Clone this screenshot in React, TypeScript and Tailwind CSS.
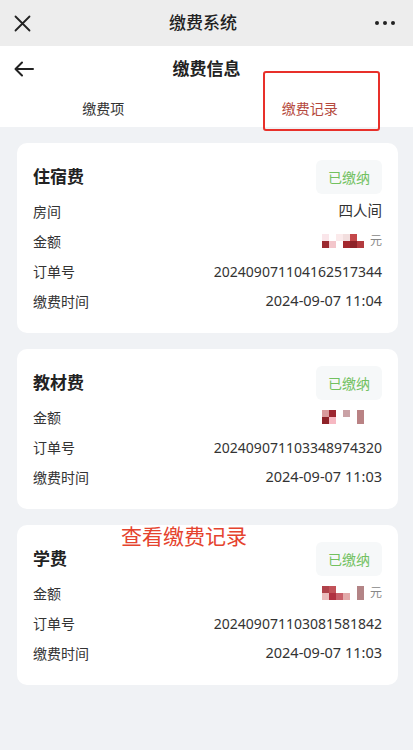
const W = "#ffffff";

type Record = {
  title: string;
  rows: { label: string; value?: string; pixels?: string[][]; yuan?: boolean; narrow?: boolean }[];
};

const records: Record[] = [
  {
    title: "住宿费",
    rows: [
      { label: "房间", value: "四人间" },
      {
        label: "金额",
        pixels: [
          ["#fae6ea", W, "#fbeaeb", "#f2dede", "#c4484a", W],
          ["#9b2a30", "#f3c6cb", W, "#a3282e", "#8e2228", "#b23a3e"],
        ],
        yuan: true,
      },
      { label: "订单号", value: "20240907110416251 7344".replace(" ", ""), narrow: true },
      { label: "缴费时间", value: "2024-09-07 11:04" },
    ],
  },
  {
    title: "教材费",
    rows: [
      {
        label: "金额",
        pixels: [
          ["#d99a9c", "#9c2630", W, "#caa2a6", W, "#b98284"],
          ["#8e2228", "#f6b8c2", W, W, W, "#b98284"],
        ],
      },
      { label: "订单号", value: "20240907110334897432 0".replace(" ", ""), narrow: true },
      { label: "缴费时间", value: "2024-09-07 11:03" },
    ],
  },
  {
    title: "学费",
    rows: [
      {
        label: "金额",
        pixels: [
          ["#b0424a", "#c25259", W, W, W, "#b38486"],
          ["#ebbcbc", "#b03040", "#c8606a", "#e2aaaa", W, "#b38486"],
        ],
        yuan: true,
      },
      { label: "订单号", value: "20240907110308158184 2".replace(" ", ""), narrow: true },
      { label: "缴费时间", value: "2024-09-07 11:03" },
    ],
  },
];

const Pixels = ({ grid, yuan }: { grid: string[][]; yuan?: boolean }) => (
  <div className="flex items-center gap-[6px]">
    <div className="flex flex-col">
      {grid.map((row, i) => (
        <div key={i} className="flex">
          {row.map((c, j) => (
            <div key={j} className="w-[7px] h-[7px]" style={{ backgroundColor: c }} />
          ))}
        </div>
      ))}
    </div>
    <span className={`text-[12px] leading-[14px] ${yuan ? "text-[#888]" : "text-white"}`}>元</span>
  </div>
);

const RecordCard = ({ rec, note }: { rec: Record; note?: boolean }) => (
  <div className="relative bg-white rounded-[10px] px-4 py-[17px]">
    {note && (
      <span className="absolute left-[104px] top-[-1px] text-[21px] leading-[24px] text-[#e5432e]">
        查看缴费记录
      </span>
    )}
    <div className="flex items-center justify-between h-[34px]">
      <span className="text-[17px] font-bold text-[#222]">{rec.title}</span>
      <span className="h-[34px] px-[12px] flex items-center rounded-[6px] bg-[#f6f8f9] text-[14px] text-[#72c160]">
        已缴纳
      </span>
    </div>
    <div className="mt-[2px] flex flex-col">
      {rec.rows.map((r) => (
        <div key={r.label} className="h-[30px] flex items-center justify-between text-[14px] text-[#333]">
          <span>{r.label}</span>
          {r.pixels ? (
            <Pixels grid={r.pixels} yuan={r.yuan} />
          ) : (
            <span className={`${r.narrow ? "text-[14px]" : "text-[14.5px]"} text-[#333]`}>{r.value}</span>
          )}
        </div>
      ))}
    </div>
  </div>
);

export default function App() {
  return (
    <div
      className="w-[413px] h-[750px] bg-[#f0f2f5] flex flex-col relative overflow-hidden"
      style={{ fontFamily: '"Noto Sans", "Noto Sans CJK SC", sans-serif' }}
    >
      {/* wechat top bar */}
      <div className="h-[46px] bg-[#ededed] flex items-center justify-between px-[14px]">
        <svg width="17" height="17" viewBox="0 0 17 17" fill="none" stroke="#222" strokeWidth="1.8" strokeLinecap="round">
          <path d="M1.5 1.5L15.5 15.5M15.5 1.5L1.5 15.5" />
        </svg>
        <span className="text-[17px] text-[#222] font-medium">缴费系统</span>
        <div className="flex gap-[4px] pr-[4px]">
          <span className="w-[4px] h-[4px] rounded-full bg-[#222]" />
          <span className="w-[4px] h-[4px] rounded-full bg-[#222]" />
          <span className="w-[4px] h-[4px] rounded-full bg-[#222]" />
        </div>
      </div>

      {/* page header */}
      <div className="bg-white relative">
        <div className="h-[46px] flex items-center justify-center relative">
          <svg className="absolute left-[14px] top-[15px]" width="20" height="16" viewBox="0 0 20 16" fill="none" stroke="#222" strokeWidth="2" strokeLinecap="round" strokeLinejoin="round">
            <path d="M19 8H2M8 1.5L1.5 8L8 14.5" />
          </svg>
          <span className="text-[17px] font-bold text-[#222]">缴费信息</span>
        </div>
        <div className="h-[35px] flex text-[14px]">
          <div className="flex-1 flex justify-center pt-[6px] text-[#333]">缴费项</div>
          <div className="flex-1 flex justify-center pt-[6px] text-[#b5493d]">缴费记录</div>
        </div>
        <div className="absolute left-[263px] top-[25px] w-[117px] h-[60px] border-2 border-[#e8302a] rounded-[3px]" />
      </div>

      <div className="flex flex-col gap-4 pl-[17px] pr-[15px] pt-4">
        {records.map((rec, i) => (
          <RecordCard key={rec.title} rec={rec} note={i === 2} />
        ))}
      </div>
    </div>
  );
}
